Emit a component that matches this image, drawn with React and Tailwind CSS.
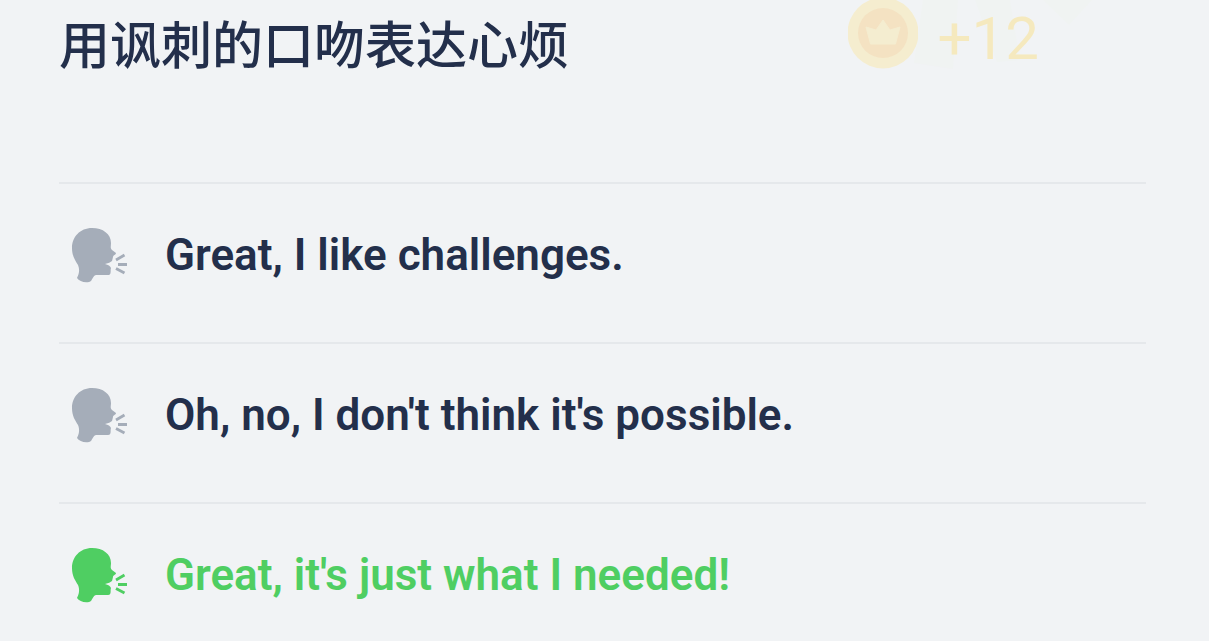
const HEAD = "M21 0C32 0 40 6 40 15C40 18 39 20 41 22L45 25C45 27 42 27 42 29L41 33Q39 35 34 36Q39 37 40 40C39 42 41 47 37 47L25 47C21 48 22 53 18 54C13 55 8 53 6 50C8 46 9 42 7 37C4 32 1 28 1 20C1 9 9 0 21 0Z";

function SpeakingHead() {
  return (
    <svg className="h-14 w-14 shrink-0" viewBox="0 0 56 56" fill="currentColor" aria-hidden="true">
      <path d={HEAD} />
      <path d="M45 32L53.5 27M47 36.5H57M45 40.5L53.5 45" fill="none" stroke="currentColor" strokeWidth="2.8" />
    </svg>
  );
}

const phrases = [
  { text: "Great, I like challenges.", correct: false },
  { text: "Oh, no, I don't think it's possible.", correct: false },
  { text: "Great, it's just what I needed!", correct: true },
];

export default function App() {
  return (
    <main className="min-h-screen bg-[#f1f3f5] pl-[59px] pr-[63px] font-['Roboto','Noto_Sans_CJK_SC',sans-serif] text-[#232f4b]">
      <header className="flex h-[182px] items-start justify-between pr-[107px]">
        <h1 className="pt-1 font-['Noto_Sans_CJK_SC',sans-serif] text-[51px] leading-[76px] font-medium">用讽刺的口吻表达心烦</h1>
        <div className="relative flex items-start gap-5 text-[#f5e9be]">
          <svg className="absolute top-0 left-0 h-[90px] w-[260px]" viewBox="0 0 260 90" fill="#f0f3f2" aria-hidden="true">
            <path d="M75 0H110L105 69L66 63ZM127 0H162L172 60L149 62ZM195 0H244L221 25Z" />
          </svg>
          <svg className="relative h-[70px] w-[70px]" viewBox="0 0 70 70" aria-hidden="true">
            <circle cx="35" cy="33" r="35.5" fill="#f5edcf" />
            <circle cx="35" cy="33" r="25" fill="#f4e2c2" />
            <path d="M18 27L28 30L35 20L42 30L52 27L47.5 44H22.5Z" fill="#f4edd0" stroke="#f4edd0" strokeLinejoin="round" />
          </svg>
          <span className="relative pt-1 text-[60px] leading-[70px]">+12</span>
        </div>
      </header>
      <ul>
        {phrases.map((phrase) => (
          <li key={phrase.text} className="h-40 border-t-2 border-[#e5e8eb]">
            <button className={`flex w-full items-start gap-[38px] pt-[43px] pl-3 text-left text-[44px] leading-[56px] font-semibold ${phrase.correct ? "text-[#4fce62]" : ""}`}>
              <span className={phrase.correct ? "pt-px" : "pt-px text-[#a5adb9]"}><SpeakingHead /></span>
              {phrase.text}
            </button>
          </li>
        ))}
      </ul>
    </main>
  );
}
